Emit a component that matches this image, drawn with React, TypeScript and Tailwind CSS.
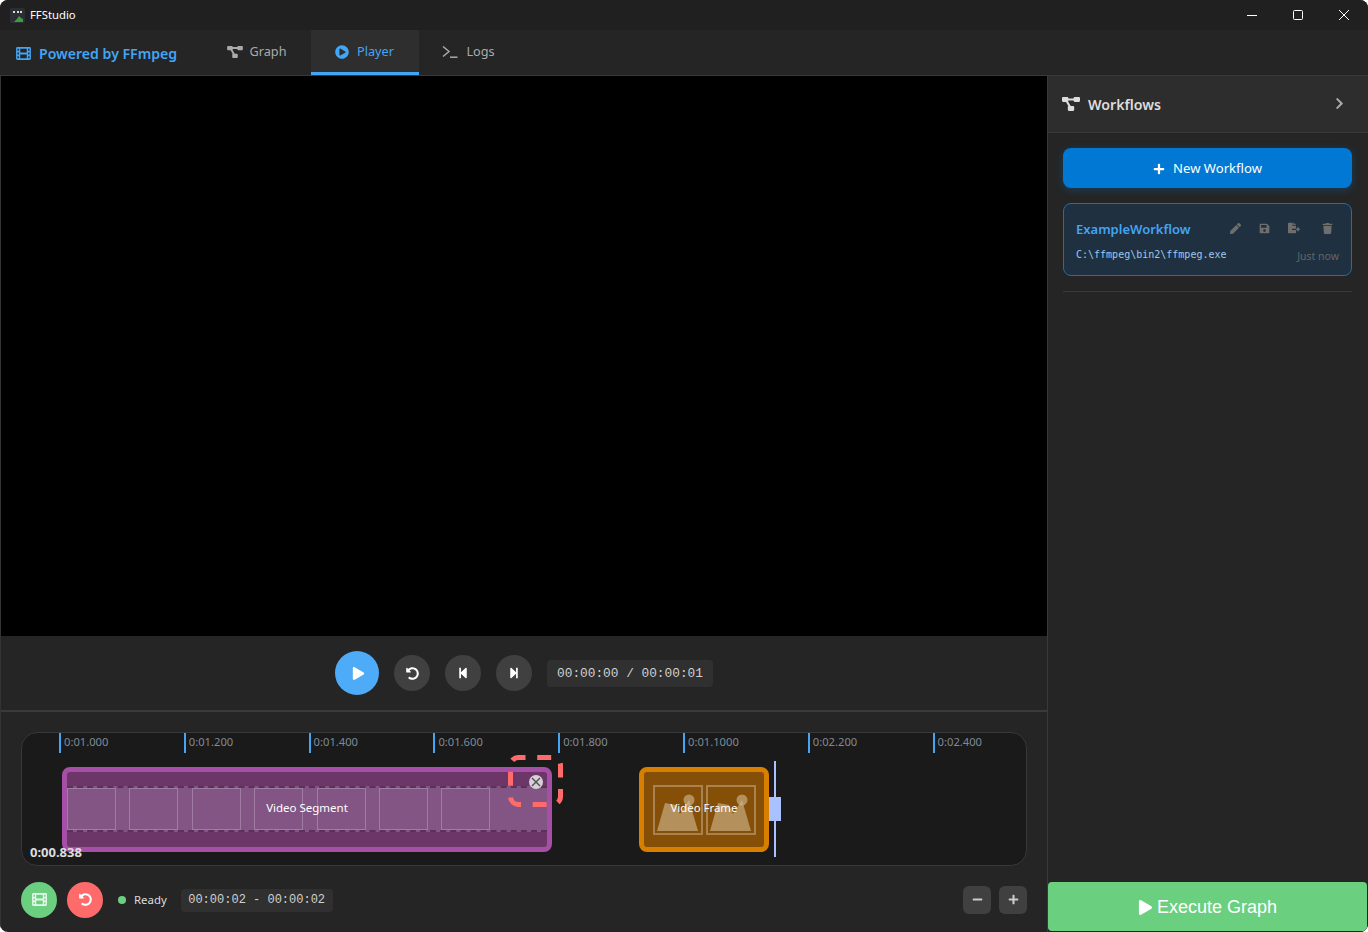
import {
  FaChevronRight,
  FaFileExport,
  FaMinus,
  FaPen,
  FaPlay,
  FaPlayCircle,
  FaPlus,
  FaSave,
  FaStepBackward,
  FaStepForward,
  FaTrash,
  FaUndoAlt,
} from "react-icons/fa";

const ticks = ["0:01.000", "0:01.200", "0:01.400", "0:01.600", "0:01.800", "0:01.1000", "0:02.200", "0:02.400"];
const frames = [0, 1, 2, 3, 4, 5, 6];

const Terminal = () => (
  <svg width="16" height="14" viewBox="0 0 16 14" fill="none" stroke="currentColor" strokeWidth="1.5">
    <path d="M1 1.5 7 6.5 1 11.5" />
    <path d="M8 12.2h7.5" />
  </svg>
);

const Film = ({ w, h }: { w: number; h: number }) => (
  <svg width={w} height={h} viewBox="0 0 16 14" fill="currentColor">
    <path
      fillRule="evenodd"
      d="M1.5 0h13A1.5 1.5 0 0 1 16 1.5v11a1.5 1.5 0 0 1-1.500 1.500h-13A1.500 1.500 0 0 1 0 12.500v-11A1.500 1.500 0 0 1 1.500 0zM1.500 2v2h1.500V2zM1.500 6v2h1.500V6zM1.500 10v2h1.500v-2zM13 2v2h1.500V2zM13 6v2h1.500V6zM13 10v2h1.500v-2zM4.500 2v4h7V2zM4.500 8v4h7V8z"
    />
  </svg>
);

const Diagram = ({ w, h }: { w: number; h: number }) => (
  <svg width={w} height={h} viewBox="0 0 17 13" fill="currentColor">
    <rect x="0" y="0" width="6" height="4.500" rx="1" />
    <rect x="11" y="0" width="6" height="4.500" rx="1" />
    <rect x="5.500" y="8.500" width="6" height="4.500" rx="1" />
    <path d="M3 2.200h11M4 3l4 7" stroke="currentColor" strokeWidth="2" fill="none" />
  </svg>
);

const Picture = () => (
  <div className="relative h-[50px] w-[50px] border-2 border-[#a9834f]">
    <svg width="46" height="46" viewBox="0 0 46 46" className="absolute inset-0">
      <circle cx="34" cy="13" r="5.500" fill="#d4bd94" opacity="0.6" />
      <path d="M10 16 2 44h41l-9-31-9 14-4-9z" fill="#d4bd94" opacity="0.6" />
    </svg>
  </div>
);

const TitleBar = () => (
  <div className="flex h-[30px] items-center justify-between bg-[#202020] pl-[10px]">
    <div className="flex items-center gap-[5px]">
      <svg width="15" height="15" viewBox="0 0 15 15">
        <rect width="15" height="15" rx="2" fill="#2b2f33" />
        <path d="M3 3h2v2H3zM7 3h2v2H7zM10 3h2v2h-2z" fill="#d9d9d9" />
        <path d="M4 14l3-3 2-3 2 2 2 1v3z" fill="#3f9a43" />
      </svg>
      <span className="text-[11.300px] text-white">FFStudio</span>
    </div>
    <div className="flex items-center pr-[1px] text-white">
      <div className="flex w-[46px] justify-center">
        <svg width="10" height="10" viewBox="0 0 10 10" stroke="currentColor" fill="none">
          <path d="M0 5.500h10" />
        </svg>
      </div>
      <div className="flex w-[46px] justify-center">
        <svg width="10" height="10" viewBox="0 0 10 10" stroke="currentColor" fill="none">
          <rect x="0.500" y="0.500" width="9" height="9" rx="1" />
        </svg>
      </div>
      <div className="flex w-[46px] justify-center">
        <svg width="10" height="10" viewBox="0 0 10 10" stroke="currentColor" fill="none">
          <path d="M0 0l10 10M10 0 0 10" />
        </svg>
      </div>
    </div>
  </div>
);

const NavBar = () => (
  <div className="flex h-[46px] border-b border-[#3a3a3a] bg-[#252525]">
    <div className="flex w-[202px] items-center gap-2 pb-[2px] pl-[16px] pt-[4px] text-[#42a5f5]">
      <Film w={15} h={13} />
      <span className="text-[14.100px] font-semibold">Powered by FFmpeg</span>
    </div>
    <div className="flex h-[45px] w-[109px] items-center justify-center gap-[7px] pb-[1px] text-[12.700px] text-[#aaaaaa]">
      <Diagram w={16} h={12} />
      <span>Graph</span>
    </div>
    <div className="flex h-[45px] w-[108px] items-center justify-center gap-2 border-b-[3px] border-[#42a5f5] bg-[#2e2e2e] pr-[1px] pt-[1px] text-[12.700px] text-[#42a5f5]">
      <FaPlayCircle size={14} />
      <span>Player</span>
    </div>
    <div className="flex h-[45px] w-[102px] items-center justify-center gap-2 pb-[1px] pr-[3px] text-[12.700px] text-[#aaaaaa]">
      <Terminal />
      <span>Logs</span>
    </div>
  </div>
);

const Controls = () => (
  <div className="flex h-[76px] items-center justify-center gap-[15px] border-b-2 border-[#3a3a3a] bg-[#252525]">
    <button className="flex h-[44px] w-[44px] items-center justify-center rounded-full bg-[#4dabf7] pl-[2px] text-white">
      <FaPlay size={13} />
    </button>
    <button className="flex h-[36px] w-[36px] items-center justify-center rounded-full bg-[#404040] text-white">
      <FaUndoAlt size={13} />
    </button>
    <button className="flex h-[36px] w-[36px] items-center justify-center rounded-full bg-[#404040] text-white">
      <FaStepBackward size={12} />
    </button>
    <button className="flex h-[36px] w-[36px] items-center justify-center rounded-full bg-[#404040] text-white">
      <FaStepForward size={12} />
    </button>
    <div className="rounded bg-[#303030] px-[10px] py-[5px] font-['Liberation_Mono',monospace] text-[12.800px] leading-[17px] text-[#d0d0d0]">
      00:00:00 / 00:00:01
    </div>
  </div>
);

const Timeline = () => (
  <div className="relative ml-[20px] mt-[20px] h-[134px] w-[1006px] overflow-hidden rounded-[16px] border border-[#383838] bg-[#1a1a1a]">
    {ticks.map((tick, i) => (
      <div
        key={tick}
        className="absolute top-0 h-[20px] border-l-2 border-[#42a5f5] pl-[3px] text-[11.200px] leading-[18px] text-[#808a96]"
        style={{ left: 37 + i * 124.8 }}
      >
        {tick}
      </div>
    ))}

    <div className="absolute left-[40px] top-[34px] h-[85px] w-[490px] overflow-hidden rounded-[8px] border-[5px] border-[#a64fa6] bg-[#6c3669]">
      <div className="mt-[14px] flex h-[46px] gap-[13.400px] border-y-2 border-dashed border-[#5a3158] bg-[#825584]">
        {frames.map((f) => (
          <div key={f} className="h-[42px] w-[49px] border border-[#a07ba2]" />
        ))}
      </div>
    </div>
    <div className="absolute left-[40px] top-[32px] flex h-[85px] w-[490px] items-center justify-center text-[11.500px] text-white">
      Video Segment
    </div>
    <svg width="55" height="52" viewBox="0 0 55 52" fill="none" className="absolute left-[486px] top-[22px]">
      <rect x="2.500" y="2.500" width="50" height="47" rx="8" stroke="#ff6b6b" strokeWidth="5" strokeDasharray="14 11.700" strokeDashoffset="7" />
    </svg>
    <div className="absolute left-[507px] top-[42px] flex h-[14px] w-[14px] items-center justify-center rounded-full bg-[#d8d0d8]">
      <svg width="10" height="10" viewBox="0 0 10 10" stroke="#555555" strokeWidth="1.500">
        <path d="M1 1l8 8M9 1 1 9" />
      </svg>
    </div>

    <div className="absolute left-[617px] top-[34px] flex h-[85px] w-[130px] items-center justify-center gap-[3px] rounded-[8px] border-[5px] border-[#d97f00] bg-[#854f08]">
      <Picture />
      <Picture />
    </div>
    <div className="absolute left-[617px] top-[32px] flex h-[85px] w-[130px] items-center justify-center text-[11.400px] text-white">
      Video Frame
    </div>

    <div className="absolute left-[752px] top-[28px] h-[96px] w-[2px] bg-[#a9c1ff]" />
    <div className="absolute left-[747px] top-[64px] h-[24px] w-[12px] bg-[#a9c1ff]" />

    <div className="absolute left-[8px] top-[110px] text-[13px] font-bold text-[#dddddd]">0:00.838</div>
  </div>
);

const BottomBar = () => (
  <div className="flex flex-1 items-center justify-between pl-[20px] pr-[20px] pt-[1px]">
    <div className="flex items-center">
      <button className="flex h-[36px] w-[36px] items-center justify-center rounded-full bg-[#6bcf80] text-[#e8f8ec]">
        <Film w={15} h={13} />
      </button>
      <button className="ml-[10px] flex h-[36px] w-[36px] items-center justify-center rounded-full bg-[#ff6b6b] text-white">
        <FaUndoAlt size={13} />
      </button>
      <span className="ml-[15px] h-[8px] w-[8px] rounded-full bg-[#6bcf80]" />
      <span className="ml-[8px] text-[11.400px] text-[#dddddd]">Ready</span>
      <div className="ml-[14px] mt-[1px] rounded bg-[#303030] px-[7.500px] py-[3px] font-['Liberation_Mono',monospace] text-[12px] leading-[17px] text-[#d0d0d0]">
        00:00:02 - 00:00:02
      </div>
    </div>
    <div className="flex gap-[8px]">
      <button className="flex h-[28px] w-[28px] items-center justify-center rounded-md bg-[#404040] text-[#cccccc]">
        <FaMinus size={11} />
      </button>
      <button className="flex h-[28px] w-[28px] items-center justify-center rounded-md bg-[#404040] text-[#cccccc]">
        <FaPlus size={11} />
      </button>
    </div>
  </div>
);

const Sidebar = () => (
  <div className="flex w-[321px] flex-col border-l border-[#3a3a3a] bg-[#252525]">
    <div className="flex h-[57px] items-center justify-between border-b border-[#3a3a3a] bg-[#2d2d2d] pl-[14px] pr-[22px] text-[#dddddd]">
      <div className="flex items-center gap-[8px]">
        <Diagram w={18} h={14} />
        <span className="pt-[1px] text-[14.200px] font-semibold">Workflows</span>
      </div>
      <FaChevronRight size={13} className="-mt-[2px] text-[#aaaaaa]" />
    </div>
    <div className="flex flex-1 flex-col px-[15px] pt-[15px]">
      <button className="flex h-[40px] w-[289px] items-center justify-center gap-[8px] rounded-lg bg-[#0078d4] pt-[1px] text-[13.100px] text-white shadow-[0_2px_8px_rgba(0,120,212,0.3)]">
        <FaPlus size={12} />
        New Workflow
      </button>
      <div className="mt-[15px] h-[73px] w-[289px] rounded-lg border border-[#1a6fb0] bg-[#1f3040] px-[12px] pt-[15px]">
        <div className="flex items-center justify-between">
          <span className="text-[13px] font-semibold leading-[20px] text-[#42a5f5]">ExampleWorkflow</span>
          <div className="-mt-[2px] flex items-center gap-[17px] pr-[6px] text-[#6e6e6e]">
            <FaPen size={11} className="mr-[1px]" />
            <FaSave size={11} className="mr-[1px]" />
            <FaFileExport size={12} />
            <FaTrash size={11} className="ml-[5px]" />
          </div>
        </div>
        <div className="mt-[5px] flex items-center justify-between">
          <span className="font-['DejaVu_Sans_Mono',monospace] text-[10px] text-[#9cc8ee]">
            C:\ffmpeg\bin2\ffmpeg.exe
          </span>
          <span className="pt-[5px] text-[10.500px] text-[#666666]">Just now</span>
        </div>
      </div>
      <div className="mt-[15px] h-px w-[289px] bg-[#3a3a3a]" />
      <div className="flex-1" />
      <button className="mb-px -ml-[15px] flex h-[49px] w-[319px] items-center justify-center gap-[4px] rounded-[4px] bg-[#6bcf80] pt-[2px] font-['Liberation_Sans',sans-serif] text-[18px] text-white">
        <FaPlay size={15} />
        Execute Graph
      </button>
    </div>
  </div>
);

export default function App() {
  return (
    <div className="flex h-[932px] w-[1368px] flex-col overflow-hidden rounded-lg bg-[#252525] font-['Noto_Sans',sans-serif]">
      <TitleBar />
      <NavBar />
      <div className="flex min-h-0 flex-1">
        <div className="flex w-[1047px] flex-col border-l border-[#333333]">
          <div className="h-[560px] bg-black" />
          <Controls />
          <Timeline />
          <BottomBar />
        </div>
        <Sidebar />
      </div>
    </div>
  );
}
